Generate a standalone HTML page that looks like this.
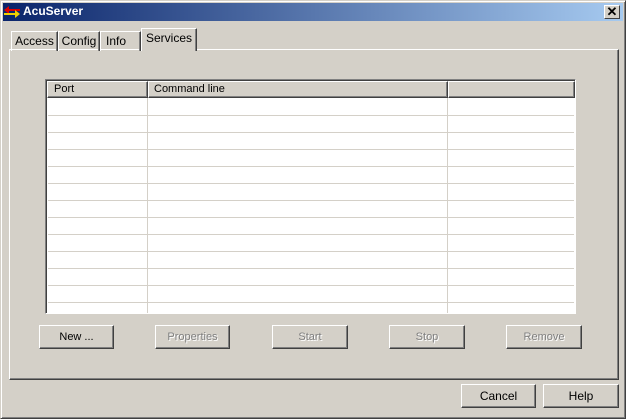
<!DOCTYPE html><html><head><style>
*{box-sizing:border-box;margin:0;padding:0}
body{width:626px;height:419px;background:#d4d0c8;font-family:"Liberation Sans",Arial,sans-serif;font-size:11px;position:relative;overflow:hidden}
.a{position:absolute}
.win{left:0;top:0;width:626px;height:419px;border:1px solid;border-color:#d4d0c8 #404040 #404040 #d4d0c8;box-shadow:inset 1px 1px #fff,inset -1px -1px #808080}
.title{left:3px;top:3px;width:620px;height:18px;background:linear-gradient(90deg,#0a246a,#a6caf0)}
.btn{position:absolute;height:24px;border:1px solid;border-color:#fff #404040 #404040 #fff;box-shadow:inset -1px -1px #808080;text-align:center;line-height:22px;font-size:11px;color:#000}
.dis{color:#808080;text-shadow:1px 1px #fff}
.tab{position:absolute;border:1px solid;border-color:#fff #404040 transparent #fff;box-shadow:inset -1px 0 #808080;border-bottom:none;height:20px;line-height:18px;text-align:center;font-size:12px}
.hl{position:absolute;left:2px;width:526px;height:1px;background:#d4d0c8}
</style></head><body>
<div class="a win"></div>
<div class="a title"></div>
<svg class="a" style="left:4px;top:5px" width="16" height="14"><polygon points="0,5 5,1 5,4 16,4 16,6 5,6 5,9" fill="#d00"/><polygon points="16,9 11,5 11,8 0,8 0,10 11,10 11,13" fill="#f0d000"/></svg>
<div class="a" style="left:23px;top:4px;color:#fff;font-weight:bold;font-size:12px">AcuServer</div>
<div class="a" style="left:604px;top:5px;width:16px;height:14px;background:#d4d0c8;border:1px solid;border-color:#fff #404040 #404040 #fff;text-align:center;line-height:11px;font-size:13px;font-weight:bold">✕</div>
<!-- panel -->
<div class="a" style="left:9px;top:49px;width:610px;height:331px;border:1px solid;border-color:#fff #404040 #404040 #fff;box-shadow:inset -1px -1px #808080"></div>
<div class="tab" style="left:11px;top:31px;width:47px">Access</div>
<div class="tab" style="left:58px;top:31px;width:42px">Config</div>
<div class="tab" style="left:100px;top:31px;width:41px;text-align:left;padding-left:5px">Info</div>
<div class="tab" style="left:141px;top:28px;width:56px;height:23px;background:#d4d0c8">Services</div>
<!-- list -->
<div class="a" style="left:45px;top:79px;width:531px;height:235px;background:#fff;border:1px solid;border-color:#808080 #fff #fff #808080;box-shadow:inset 1px 1px #404040">
<div class="a" style="left:101px;top:18px;width:1px;height:215px;background:#d4d0c8"></div>
<div class="a" style="left:401px;top:18px;width:1px;height:215px;background:#d4d0c8"></div>
<div class="hl" style="top:35px"></div><div class="hl" style="top:52px"></div><div class="hl" style="top:69px"></div><div class="hl" style="top:86px"></div><div class="hl" style="top:103px"></div><div class="hl" style="top:120px"></div><div class="hl" style="top:137px"></div><div class="hl" style="top:154px"></div><div class="hl" style="top:171px"></div><div class="hl" style="top:188px"></div><div class="hl" style="top:205px"></div><div class="hl" style="top:222px"></div>
<div class="btn" style="left:1px;top:1px;width:101px;height:17px;line-height:15px;text-align:left;padding-left:6px;box-shadow:inset -1px -1px #808080;border-color:#fff #404040 #404040 #fff;background:#d4d0c8">Port</div>
<div class="btn" style="left:102px;top:1px;width:300px;height:17px;line-height:15px;text-align:left;padding-left:5px;background:#d4d0c8">Command line</div>
<div class="btn" style="left:402px;top:1px;width:127px;height:17px;background:#d4d0c8"></div>
</div>
<div class="btn" style="left:39px;top:325px;width:75px">New ...</div>
<div class="btn dis" style="left:155px;top:325px;width:75px">Properties</div>
<div class="btn dis" style="left:272px;top:325px;width:76px">Start</div>
<div class="btn dis" style="left:389px;top:325px;width:76px">Stop</div>
<div class="btn dis" style="left:506px;top:325px;width:76px">Remove</div>
<div class="btn" style="left:461px;top:384px;width:75px;font-size:12px">Cancel</div>
<div class="btn" style="left:543px;top:384px;width:76px;font-size:12px">Help</div>
</body></html>
